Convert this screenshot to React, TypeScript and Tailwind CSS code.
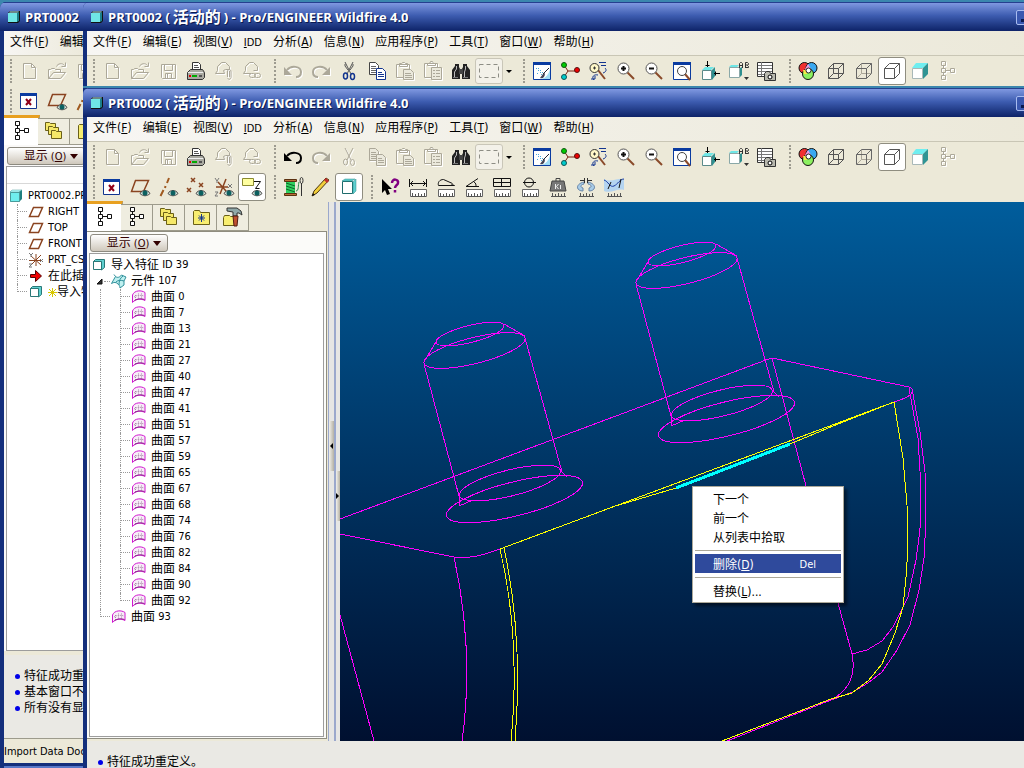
import type { ReactNode } from "react";
import clsx from "clsx";

type IconName = keyof typeof icons;

type Tool = {
  icon: IconName;
  label: string;
  disabled?: boolean;
  pressed?: boolean;
};

type MenuEntry = { text: string; mnemonic?: string };

const menus: MenuEntry[] = [
  { text: "文件", mnemonic: "F" },
  { text: "编辑", mnemonic: "E" },
  { text: "视图", mnemonic: "V" },
  { text: "IDD" },
  { text: "分析", mnemonic: "A" },
  { text: "信息", mnemonic: "N" },
  { text: "应用程序", mnemonic: "P" },
  { text: "工具", mnemonic: "T" },
  { text: "窗口", mnemonic: "W" },
  { text: "帮助", mnemonic: "H" },
];

const narrowMenus: MenuEntry[] = [{ text: "文件", mnemonic: "F" }, { text: "编辑" }];

const surfaces = [0, 7, 13, 21, 27, 40, 47, 41, 51, 57, 59, 65, 67, 68, 74, 76, 82, 84, 90, 92];

const g = "#aca899";

const eye = (
  <>
    <path d="M10 16.500c2-4 8-4 10 0-3 3-7 3-10 0z" fill="#d8e4dc" stroke="#444" />
    <circle cx="15" cy="16" r="2.500" fill="#0c6060" />
  </>
);

const icons = {
  fresh: <path d="M4.500 2.500h8l4 4v11h-12zM12.500 2.500v4h4" fill="none" stroke={g} />,
  open: (
    <path
      d="M1.500 17.500v-9h2l1-1h3l1 1h5v3M1.500 17.500l5-6h12l-5 6zM9.500 5.500c1-3 6-4 8-1M18.500 1.500v4h-4"
      fill="none"
      stroke={g}
    />
  ),
  save: (
    <>
      <path d="M3.500 3.500h14v14h-13l-1-1z" fill="none" stroke={g} />
      <path d="M6.500 3.500v6h8v-6M7.500 17.500v-5h6v5M9.500 13v4" fill="none" stroke={g} />
    </>
  ),
  print: (
    <>
      <path d="M6.500 9.500v-8h6l2 2v6z" fill="#fff" stroke="#333" />
      <path d="M8 4.500h4M8 6.500h5M8 8.500h5" stroke="#555" />
      <path d="M1.500 11.500l3-3h12l2 3v5l-2 2h-15z" fill="#a9a9a0" stroke="#333" />
      <path d="M2 11.500h15" stroke="#eee" />
      <path d="M3 14h2v2H3z" fill="#d00" />
      <path d="M6 14h5v2H6z" fill="#0a0" />
      <path d="M13 14h3v2h-3z" fill="#555" />
    </>
  ),
  mailClip: (
    <path
      d="M10.500 12.500h-9l2-3v-4l4-4h4l4 4v3h-4l-2 1zM13.500 16V9.500l1.500-1 2 1v7l-1.500 2-2-1M15.500 10v6"
      fill="none"
      stroke={g}
    />
  ),
  mailLink: (
    <>
      <path d="M9 12.500h-7.500l2-3v-4l4-4h4l4 4v4h-4" fill="none" stroke={g} />
      <rect x="7.500" y="12.500" width="6" height="4" rx="2" fill="none" stroke={g} />
      <rect x="12.500" y="12.500" width="6" height="4" rx="2" fill="none" stroke={g} />
    </>
  ),
  undo: (
    <>
      <path d="M4 9c4-5 14-4 14 2 0 3-2 5-5 5" fill="none" stroke="currentColor" strokeWidth="2" />
      <path d="M1 6v8h8z" fill="currentColor" />
    </>
  ),
  redo: (
    <>
      <path d="M16 9C12 4 2 5 2 11c0 3 2 5 5 5" fill="none" stroke="currentColor" strokeWidth="2" />
      <path d="M19 6v8h-8z" fill="currentColor" />
    </>
  ),
  cut: (
    <>
      <path d="M6 1l6 12M14 1l-6 12M6 3v2l3 4M14 3v2l-3 4" fill="none" stroke="#555" />
      <ellipse cx="6.500" cy="15" rx="2" ry="3" fill="none" stroke="#12348f" strokeWidth="1.500" />
      <ellipse cx="13.500" cy="15.500" rx="2" ry="3" fill="none" stroke="#12348f" strokeWidth="1.500" />
    </>
  ),
  cutOff: (
    <>
      <path d="M6 1l6 12M14 1l-6 12" fill="none" stroke={g} />
      <ellipse cx="6.500" cy="15" rx="2" ry="3" fill="none" stroke={g} />
      <ellipse cx="13.500" cy="15.500" rx="2" ry="3" fill="none" stroke={g} />
    </>
  ),
  copy: (
    <>
      <path d="M2.500 1.500h6l3 3v9h-9z" fill="#fff" stroke="#444" />
      <path d="M4 5.500h5M4 7.500h5M4 9.500h5M4 11.500h5" stroke="#666" />
      <path d="M9.500 7.500h6l3 3v8h-9z" fill="#fff" stroke="#12348f" />
      <path d="M11 11.500h4M11 13.500h6M11 15.500h6" stroke="#12348f" />
    </>
  ),
  copyOff: (
    <>
      <path d="M2.500 1.500h6l3 3v9h-9z" fill="#ebe9dc" stroke={g} />
      <path d="M4 5.500h5M4 7.500h5M4 9.500h5M4 11.500h5" stroke={g} />
      <path d="M9.500 7.500h6l3 3v8h-9z" fill="#ebe9dc" stroke={g} />
      <path d="M11 11.500h4M11 13.500h6M11 15.500h6" stroke={g} />
    </>
  ),
  paste: (
    <>
      <path d="M1.500 3.500h13v13h-13zM4.500 5.500v-3h2l1-1h2l1 1h2v3z" fill="none" stroke={g} />
      <path d="M8.500 8.500h7l3 3v7h-10z" fill="#ebe9dc" stroke={g} />
      <path d="M10 12.500h6M10 14.500h7M10 16.500h7" stroke={g} />
    </>
  ),
  pasteSpecial: (
    <>
      <path d="M1.500 2.500h13v14h-13zM4.500 4.500v-2h2l1-2h2l1 2h2v2z" fill="none" stroke={g} />
      <path d="M8.500 6.500h10v12h-10z" fill="#ebe9dc" stroke={g} />
      <path d="M10 9.500h2M13 9.500h4M10 12.500h2M13 12.500h4M10 15.500h2M13 15.500h4" stroke={g} />
    </>
  ),
  find: (
    <>
      <path d="M4 3h4v3l1 2v10H1V9l3-4zM12 3h4v2l3 4v9h-8V8l1-2z" fill="#222" />
      <path d="M8 8h4v5H8z" fill="#444" />
      <path d="M5.500 5v3L3.500 11v6M14.500 5v3l-1 3v6" stroke="#bbb" fill="none" />
      <path d="M2 16.500h5M12 16.500h5" stroke="#777" />
    </>
  ),
  select: <path d="M.500 3.500h19v13H.500z" fill="none" stroke="#8d8d85" strokeDasharray="4 3" />,
  redraw: (
    <>
      <path d="M1.500 1.500h17v17h-17z" fill="#fff" stroke="#0a3ba0" />
      <path d="M1 1h18v3H1z" fill="#0a3ba0" />
      <path d="M9 18c5-1 8-5 9-10v10z" fill="#9fdcf5" />
      <path d="M4 7.500h3M6 9.500h4M8 11.500h4M9 13.500h3M5 12.500h2" stroke="#4aa6d8" strokeDasharray="1 1" />
      <path d="M11 13l6-6" stroke="#223" />
      <path d="M8 17c3 1 5-1 5-5l-2 1z" fill="#445" />
    </>
  ),
  orient: (
    <>
      <path d="M4 4l4 6h9M8 10l-4 6" fill="none" stroke="#7a1f10" />
      <circle cx="4" cy="4" r="2.500" fill="#0c0" stroke="#151" />
      <circle cx="4" cy="16" r="2.500" fill="#0cc" stroke="#155" />
      <circle cx="17" cy="9" r="2.500" fill="#e00" stroke="#511" />
    </>
  ),
  spin: (
    <>
      <path d="M10 9l7 9" stroke="#8a4a2a" strokeWidth="2" />
      <circle cx="6.500" cy="7" r="4.500" fill="#fff8c8" stroke="#333" />
      <path d="M5 7h3M6.500 5.500v3" stroke="#333" />
      <path d="M11 1.500h7M13 4.500h5M17 7c2 2 1 4-2 5M10 14c-4-1-7 2-4 5M3 18h4v-3" fill="none" stroke="#12348f" />
    </>
  ),
  zoomIn: (
    <>
      <path d="M11 11l7 7" stroke="#8a4a2a" strokeWidth="2" />
      <circle cx="7.500" cy="7.500" r="5.500" fill="#fff" stroke="#555" />
      <path d="M5 7.500h5M7.500 5v5" stroke="#111" strokeWidth="2" />
    </>
  ),
  zoomOut: (
    <>
      <path d="M11 11l7 7" stroke="#8a4a2a" strokeWidth="2" />
      <circle cx="7.500" cy="7.500" r="5.500" fill="#fff" stroke="#555" />
      <path d="M5 7.500h5" stroke="#111" strokeWidth="2" />
    </>
  ),
  refit: (
    <>
      <path d="M1.500 1.500h17v17h-17z" fill="#fff" stroke="#0a3ba0" />
      <path d="M1 1h18v3H1z" fill="#0a3ba0" />
      <path d="M13 13l5 6" stroke="#8a4a2a" strokeWidth="2" />
      <circle cx="10" cy="10" r="4.500" fill="#fff" stroke="#444" />
    </>
  ),
  reorient: (
    <>
      <path d="M2.500 9.500h9v9h-9z" fill="#fff" stroke="#5a8a8a" />
      <path d="M2 9l3-3h9l-3 3z" fill="#6fe6e6" />
      <path d="M12 9l3-3v9l-3 4z" fill="#2f8f8f" />
      <path d="M7.500 0v6M5.500 4.500h4M20 12.500h-6M15.500 10.500v4" stroke="#000" />
    </>
  ),
  viewList: (
    <>
      <path d="M1.500 6.500h10v10h-10z" fill="#fff" stroke="#8aa8a8" />
      <path d="M1 6l2-2h8l-2 2z" fill="#6fe6e6" />
      <path d="M12 7l2-1v8l-2 2z" fill="#2f8f8f" />
      <path d="M11.500 7V2.500l1-1h1l1 1V7M12 4.500h3M17.500 7V1.500h2l1 1v1l-1 1 1 1v1h-3M18 4h2" fill="none" stroke="#333" />
      <path d="M16 16h5l-2.500 3z" fill="#333" />
    </>
  ),
  viewManager: (
    <>
      <path d="M1.500 1.500h15v14h-15z" fill="#fff" stroke="#333" />
      <path d="M2 4.500h14M2 7.500h14M2 10.500h14M2 13.500h14M5.500 1v14" stroke="#777" />
      <path d="M8.500 12.500l2-2h3l1 2h5v7h-11z" fill="#b8b8ae" stroke="#333" />
      <circle cx="14" cy="16" r="2" fill="#fff" stroke="#000" />
    </>
  ),
  color: (
    <>
      <circle cx="6.500" cy="7" r="5.500" fill="#f03030" stroke="#111" />
      <circle cx="13.500" cy="7" r="5.500" fill="#3aa8f0" stroke="#111" />
      <circle cx="10" cy="13" r="5.500" fill="#8cf060" stroke="#111" />
      <path d="M7 8l3-5 3 5-3 4z" fill="#f49ae0" />
      <path d="M5 9h4v4H6z" fill="#f5e94a" />
      <circle cx="10.500" cy="9.500" r="2.500" fill="#fff" stroke="#222" />
    </>
  ),
  wireframe: (
    <path
      d="M2.500 7.500h10v10h-10zM7.500 2.500h10v10h-10zM2.500 7.500l5-5M12.500 7.500l5-5M2.500 17.500l5-5M12.500 17.500l5-5"
      fill="none"
      stroke="#555"
    />
  ),
  hidden: (
    <>
      <path d="M7.500 3v9.500H17M3 17l4.500-4.500" fill="none" stroke="#aaa698" />
      <path d="M2.500 7.500h10v10h-10zM2.500 7.500l5-5h10v10l-5 5M12.500 7.500l5-5" fill="none" stroke="#666" />
    </>
  ),
  noHidden: <path d="M2.500 7.500h10v10h-10zM2.500 7.500l5-5h10v10l-5 5M12.500 7.500l5-5" fill="#fff" stroke="#555" />,
  shaded: (
    <>
      <path d="M2.500 7.500h10v10h-10z" fill="#fff" stroke="#a8b8b8" />
      <path d="M2 7l4-5h12l-5 5z" fill="#6feef0" />
      <path d="M13 7l5-5v11l-5 5z" fill="#2f9494" />
    </>
  ),
  treeOff: (
    <path
      d="M3.500.500h4v4h-4zM3.500 7.500h4v4h-4zM3.500 14.500h4v4h-4zM12.500 7.500h4v4h-4zM5.500 5v2M5.500 12v2M8 9.500h4"
      fill="none"
      stroke={g}
    />
  ),
  tree: (
    <path
      d="M3.500.500h4v4h-4zM3.500 7.500h4v4h-4zM3.500 14.500h4v4h-4zM12.500 7.500h4v4h-4zM5.500 5v2M5.500 12v2M8 9.500h4"
      fill="#fff"
      stroke="#111"
    />
  ),
  closeWin: (
    <>
      <path d="M1.500 2.500h16v15h-16z" fill="#fff" stroke="#12348f" />
      <path d="M1 2h17v3H1z" fill="#0a3ba0" />
      <path d="M7 8l5 6M12 8l-5 6" stroke="#900018" strokeWidth="2" />
    </>
  ),
  planes: (
    <>
      <path d="M5.500 3.500h13l-5 11h-12z" fill="none" stroke="#8a4420" strokeWidth="1.500" />
      {eye}
    </>
  ),
  axes: (
    <>
      <path d="M11 1L9 6M7.500 9l-.5 2M5.500 13l-3 6" stroke="#a05a20" strokeWidth="2" />
      {eye}
    </>
  ),
  points: (
    <>
      <path d="M5 1l4 4M9 1L5 5M1 11l4 4M5 11l-4 4M13 6l4 4M17 6l-4 4" stroke="#8a4420" strokeWidth="1.500" />
      {eye}
    </>
  ),
  csys: (
    <>
      <path d="M12 2L6 17M4 5l8 9M2 10h12" stroke="#8a4420" strokeWidth="1.500" />
      <path d="M1 1l2 3 2-3M3 4v2M14 7l4 4M18 7l-4 4M1 15h3l-3 4h3" fill="none" stroke="#777" />
      {eye}
    </>
  ),
  notes: (
    <>
      <path d="M.500 1.500h11v7h-11z" fill="#ffffa0" stroke="#8a8a30" />
      <path d="M12 4.500h6.500l-5 7h4" fill="none" stroke="#111" />
      {eye}
    </>
  ),
  thread: (
    <>
      <path d="M1.500 2.500h12v2h-12zM1.500 16.500h12v2h-12z" fill="#b87038" stroke="#5a3010" />
      <path d="M3 5h9v11H3z" fill="#2fcf5f" />
      <path d="M3 6l9 3M3 9l9 3M3 12l9 3" stroke="#0a6a2a" />
      <path d="M18.500 19V6" stroke="#333" />
      <ellipse cx="18.500" cy="3.500" rx="1.500" ry="3" fill="none" stroke="#333" />
      <path d="M13 14c3 0 2-6 3-9" fill="none" stroke="#2a8a4a" />
    </>
  ),
  pencil: (
    <>
      <path d="M1 19l2-5L15 1l3 2L6 16z" fill="#f2cf3a" stroke="#4a3510" />
      <path d="M14 2l3 3" stroke="#c03030" strokeWidth="3" />
      <path d="M1 19l1-3 2 2z" fill="#111" />
    </>
  ),
  feature: (
    <>
      <path d="M3.500 4.500h10v12h-10z" fill="#fff" stroke="#1d6b6b" />
      <path d="M3 4l3-2h10l-3 2zM14 5l3-3v12l-3 3z" fill="#5fd0d0" stroke="#2f8f8f" strokeWidth=".5" />
    </>
  ),
  help: (
    <>
      <path d="M2 2v14l3-3 2 5 3-1-2-5h4z" fill="#000" />
      <path d="M12 6c0-5 7-4 6 0 0 2-3 2-3 5M15 13v2.500" fill="none" stroke="#800080" strokeWidth="2.500" />
    </>
  ),
  distance: (
    <path d="M1.500 2v8M18.500 2v8M2 6.500h16M5 4L2.500 6.500 5 9M15 4l2.500 2.500L15 9" fill="none" stroke="#111" />
  ),
  arcLen: <path d="M2.500 8.500h16l-3-1M2.500 8.500c-1-3 1-6 5-6l9 4" fill="none" stroke="#111" />,
  angle: <path d="M2 9.500h13M2 9.500l12-8M10 5c2 1 2 3 2 4" fill="none" stroke="#111" />,
  area: <path d="M1.500 1.500h17v8h-17zM2 5.500h16M9.500 1v8" fill="none" stroke="#111" />,
  diameter: (
    <>
      <circle cx="9" cy="5.500" r="4.500" fill="none" stroke="#111" />
      <path d="M3 5.500h13" stroke="#111" />
    </>
  ),
  mass: (
    <>
      <path d="M4 4h12l2 10H2z" fill="#777" stroke="#444" />
      <path d="M8 4V1.500h4V4" fill="none" stroke="#444" />
      <path d="M7.500 7v5M10.500 7l-2 2.500 2 2.500M12.500 8v4" fill="none" stroke="#eee" />
    </>
  ),
  section: (
    <>
      <path d="M8 5c-9 2-8 9-1 9v-3c-3-1-3-3 1-4zM12 5c9 2 8 9 1 9v-3c3-1 3-3-1-4z" fill="#a8cce8" stroke="#6a86a8" />
      <path d="M4 3.500h5M11 3.500h5M8.500 1v5M11.500 1v5" stroke="#333" />
    </>
  ),
  curvature: (
    <>
      <path d="M0 2c7 4 13-1 20 0v11c-7-2-13 4-20 1z" fill="#b4d4f0" />
      <path d="M0 3c4 1 6 8 10 6s6-7 10-7" fill="none" stroke="#1a3aa0" />
      <path d="M7 5l-3 7M17 2l-2 9" stroke="#111" />
    </>
  ),
};

const rulers: IconName[] = ["distance", "arcLen", "angle", "area", "diameter"];
const ticked: IconName[] = [...rulers, "mass", "section", "curvature"];

function Icon({ name }: { name: IconName }) {
  return (
    <svg width="20" height="20" viewBox="0 0 20 20" overflow="visible" className="shrink-0" aria-hidden="true">
      {icons[name]}
      {rulers.includes(name) && <path d="M2.500 12.500h16v7h-16z" fill="#fff" stroke="#666" />}
      {ticked.includes(name) && (
        <path d="M3 19.500h15M4.500 16v3M7.500 17v2M10.500 16v3M13.500 17v2M16.500 16v3" stroke="#555" />
      )}
    </svg>
  );
}

function ToolButton({ icon, label, disabled, pressed }: Tool) {
  return (
    <button
      type="button"
      aria-label={label}
      disabled={disabled}
      className={clsx(
        "flex h-7 w-7 shrink-0 items-center justify-center rounded-[3px]",
        disabled ? "text-[#aca899] drop-shadow-[1px_1px_0_#fff]" : "text-black",
        pressed && "border border-[#8f8d80] bg-white"
      )}
    >
      <Icon name={icon} />
    </button>
  );
}

function Grip({ first }: { first?: boolean }) {
  return (
    <div className={clsx("flex h-6 shrink-0 justify-end pr-[3px]", first ? "w-[11px]" : "w-[13px]")}>
      <span className="h-full border-l-2 border-dotted border-[#9d9b90]" />
    </div>
  );
}

const Row = ({ children }: { children: ReactNode }) => (
  <div role="toolbar" className="flex h-[30px] shrink-0 items-center overflow-hidden">
    {children}
  </div>
);

function MainToolbar({ editing }: { editing?: boolean }) {
  return (
    <Row>
      <Grip first />
      <ToolButton icon="fresh" label="新建" disabled />
      <ToolButton icon="open" label="打开" disabled />
      <ToolButton icon="save" label="保存" disabled />
      <ToolButton icon="print" label="打印" />
      <ToolButton icon="mailClip" label="发送附件" disabled />
      <ToolButton icon="mailLink" label="发送链接" disabled />
      <Grip />
      <ToolButton icon="undo" label="撤消" disabled={!editing} />
      <ToolButton icon="redo" label="重做" disabled />
      <ToolButton icon={editing ? "cutOff" : "cut"} label="剪切" disabled={editing} />
      <ToolButton icon={editing ? "copyOff" : "copy"} label="复制" disabled={editing} />
      <ToolButton icon="paste" label="粘贴" disabled />
      <ToolButton icon="pasteSpecial" label="选择性粘贴" disabled />
      <ToolButton icon="find" label="查找" />
      <button
        type="button"
        aria-label="选择框"
        className="flex h-[26px] w-7 shrink-0 items-center justify-center rounded-[3px] border border-[#c9c6b8] bg-[#f3f1e9]"
      >
        <Icon name="select" />
      </button>
      <button type="button" aria-label="选择选项" className="flex h-6 w-3 shrink-0 items-center justify-center">
        <span className="border-x-3 border-t-3 border-x-transparent border-t-black" />
      </button>
      <Grip />
      <ToolButton icon="redraw" label="重画" />
      <ToolButton icon="orient" label="旋转中心" />
      <ToolButton icon="spin" label="定向模式" />
      <ToolButton icon="zoomIn" label="放大" />
      <ToolButton icon="zoomOut" label="缩小" />
      <ToolButton icon="refit" label="重新调整" />
      <ToolButton icon="reorient" label="重定向" />
      <ToolButton icon="viewList" label="视图列表" />
      <ToolButton icon="viewManager" label="视图管理器" />
      <div className="w-px shrink-0" />
      <Grip />
      <ToolButton icon="color" label="外观" />
      <ToolButton icon="wireframe" label="线框" />
      <ToolButton icon="hidden" label="隐藏线" />
      <ToolButton icon="noHidden" label="无隐藏线" pressed />
      <ToolButton icon="shaded" label="着色" />
      <ToolButton icon="treeOff" label="模型树" disabled />
    </Row>
  );
}

function DatumToolbar() {
  return (
    <Row>
      <Grip first />
      <ToolButton icon="closeWin" label="关闭窗口" />
      <ToolButton icon="planes" label="基准平面" />
      <ToolButton icon="axes" label="基准轴" />
      <ToolButton icon="points" label="基准点" />
      <ToolButton icon="csys" label="坐标系" />
      <ToolButton icon="notes" label="注释" pressed />
      <Grip />
      <ToolButton icon="thread" label="修复" />
      <ToolButton icon="pencil" label="草绘" />
      <ToolButton icon="feature" label="特征" pressed />
      <Grip />
      <ToolButton icon="help" label="帮助" />
      <ToolButton icon="distance" label="距离" />
      <ToolButton icon="arcLen" label="长度" />
      <ToolButton icon="angle" label="角度" />
      <ToolButton icon="area" label="面积" />
      <ToolButton icon="diameter" label="直径" />
      <ToolButton icon="mass" label="质量" />
      <ToolButton icon="section" label="截面" />
      <ToolButton icon="curvature" label="曲率" />
    </Row>
  );
}

function TitleBar({ children, minimizable }: { children: ReactNode; minimizable?: boolean }) {
  return (
    <div className="flex h-[29px] shrink-0 items-center overflow-hidden border-t border-[#26408f] bg-linear-to-b from-[#8098e0] via-[#3d5cb0] via-45% to-[#0e2368] pl-[7px] font-bold text-white">
      <svg width="14" height="14" viewBox="0 0 14 14" className="mr-1 shrink-0" aria-hidden="true">
        <path d="M1 3l2-2h10v10l-2 2H1z" fill="#111" />
        <path d="M1 3h9v9H1z" fill="#6fe6e6" />
        <path d="M2 2.500l1-1h9l-1 1z" fill="#c8ffff" />
        <path d="M10 3l2-1v9l-2 1z" fill="#1a7f8a" />
      </svg>
      <h1 className="flex items-center whitespace-pre font-['Open_Sans','Noto_Sans_CJK_SC',sans-serif] text-[13px] leading-6 [text-shadow:1px_1px_0_#0a1a50]">
        {children}
      </h1>
      {minimizable && (
        <button
          type="button"
          aria-label="最小化"
          className="mr-12 ml-auto h-[15px] w-5 shrink-0 rounded-[2px] border border-[#a8bcf0] bg-[#3a58b0] pt-1.5 pl-1"
        >
          <span className="block h-[3px] w-2 bg-[#0a1a50]" />
        </button>
      )}
    </div>
  );
}

const fullTitle = (
  <>
    PRT0002 (<span className="mx-[3px] text-base leading-6">活动的</span>) - Pro/ENGINEER Wildfire 4.0
  </>
);

function MenuBar({ entries }: { entries: MenuEntry[] }) {
  return (
    <nav className="flex h-[25px] shrink-0 items-center gap-[11px] overflow-hidden border-b border-[#c9c6b5] bg-linear-to-r from-[#f7f6f3] to-[#ebe8d8] pb-0.5 pl-1.5">
      {entries.map(({ text, mnemonic }) => (
        <button key={text} type="button" className="shrink-0 whitespace-nowrap leading-5">
          {text === "IDD" ? (
            <span className="text-[11px]">
              <u>I</u>DD
            </span>
          ) : (
            text
          )}
          {mnemonic && (
            <>
              (<u>{mnemonic}</u>)
            </>
          )}
        </button>
      ))}
    </nav>
  );
}

type FrameProps = {
  className: string;
  title: ReactNode;
  entries: MenuEntry[];
  minimizable?: boolean;
  children: ReactNode;
};

function WindowFrame({ className, title, entries, minimizable, children }: FrameProps) {
  return (
    <section className={clsx("absolute border-t-2 border-[#3b87ae]", className)}>
      <div className="flex h-full flex-col overflow-hidden rounded-tl-md bg-[#142f7c]">
        <TitleBar minimizable={minimizable}>{title}</TitleBar>
        <div className="ml-1 flex min-h-0 flex-1 flex-col bg-[#ece9d8]">
          <MenuBar entries={entries} />
          {children}
        </div>
      </div>
    </section>
  );
}

const FolderStack = () => (
  <svg width="20" height="20" viewBox="0 0 20 20" className="shrink-0" aria-hidden="true">
    {[0, 4, 8].map((n) => (
      <path
        key={n}
        d={`M${1.5 + (n * 3) / 4} ${1.5 + n}h4l1 1h5v7h-10z`}
        fill="#f5e868"
        stroke="#6a6018"
      />
    ))}
  </svg>
);

const FolderStar = () => (
  <svg width="20" height="20" viewBox="0 0 20 20" className="shrink-0" aria-hidden="true">
    <path d="M2.500 4.500l1-1h5l1 2h9v12h-16z" fill="#f8ee70" stroke="#6a6018" />
    <path d="M10.500 7v8M7 11h7M8 8.500l5 5M13 8.500l-5 5" stroke="#12348f" />
  </svg>
);

const FolderHammer = () => (
  <svg width="20" height="20" viewBox="0 0 20 20" className="shrink-0" aria-hidden="true">
    <path d="M.500 10.500l1-2h5l1 1h5v9h-12z" fill="#f8ee70" stroke="#6a6018" />
    <path d="M4 1h10l4 3 1 4-3-2h-2v3h-4V5L4 4z" fill="#90a8a8" stroke="#333" />
    <path d="M10 9h5l-1 10h-3z" fill="#c05030" stroke="#501c10" />
  </svg>
);

function Tabs({ items }: { items: { label: string; node: ReactNode }[] }) {
  return (
    <div role="tablist" className="flex h-[29px] shrink-0 items-end">
      {items.map(({ label, node }, i) => (
        <button
          key={label}
          type="button"
          role="tab"
          aria-label={label}
          aria-selected={i === 0}
          className={clsx(
            "flex shrink-0 items-center justify-center border-r border-[#9d9b8c] pb-px pl-px",
            i === 0
              ? "h-[30px] w-9 border-t-[3px] border-t-[#e8a020] bg-white"
              : "h-[27px] w-8 border-t border-b bg-[#efede0]",
            i === 1 && "-ml-0.5"
          )}
        >
          {node}
        </button>
      ))}
    </div>
  );
}

function ShowButton() {
  return (
    <button
      type="button"
      className="flex h-[18px] w-[78px] shrink-0 items-center justify-center gap-1 rounded-[3px] border border-[#8d8a80] bg-linear-to-b from-white to-[#cfc8bc] leading-4 text-[#300]"
    >
      <span className="pl-2.5">
        显示<span className="text-[11px]"> (<u>O</u>)</span>
      </span>
      <span className="border-x-4 border-t-5 border-x-transparent border-t-[#300]" />
    </button>
  );
}

type GuideKind = "line" | "tee" | "end";

function Guide({ kind }: { kind: GuideKind }) {
  return (
    <span className="flex h-4 w-5 shrink-0 pl-2.5">
      <span className={clsx("border-l border-dotted border-[#999]", kind === "end" ? "h-2" : "h-4")} />
      {kind !== "line" && <span className="h-2 flex-1 border-b border-dotted border-[#999]" />}
    </span>
  );
}

function TreeRow({ guides, icon, children }: { guides: GuideKind[]; icon: ReactNode; children: ReactNode }) {
  return (
    <li className="flex h-4 items-center whitespace-nowrap leading-4">
      {guides.map((kind, i) => (
        <Guide key={i} kind={kind} />
      ))}
      <span className="mr-1 ml-px flex w-4 shrink-0 justify-center">{icon}</span>
      {children}
    </li>
  );
}

const N = ({ children }: { children: ReactNode }) => <span className="text-[11px]">{children}</span>;

const CubeIcon = () => (
  <svg width="12" height="12" viewBox="0 0 12 12" aria-hidden="true">
    <path d="M.500 2.500h8v8h-8z" fill="#fff" stroke="#2a7878" />
    <path d="M.500 2.500l2-2h9v8l-3 2.500v-8.500z" fill="#5fd0d0" stroke="#2a7878" />
  </svg>
);

const PartIcon = () => (
  <svg width="14" height="14" viewBox="0 0 14 14" aria-hidden="true">
    <path d="M1 3h9v10H1z" fill="#6feeee" />
    <path d="M1 3l2-2h10l-3 2z" fill="#b8ffff" stroke="#4a9a9a" strokeWidth=".5" />
    <path d="M10 3l3-2v9l-3 3z" fill="#1f8080" />
    <path d="M1.500 3.500h9v9h-9z" fill="none" stroke="#4a9a9a" />
  </svg>
);

const PlaneIcon = () => (
  <svg width="16" height="14" viewBox="0 0 16 14" aria-hidden="true">
    <path d="M5.500 2.500h9l-4 9h-9z" fill="none" stroke="#8a4420" strokeWidth="1.500" />
  </svg>
);

const CsysIcon = () => (
  <svg width="16" height="16" viewBox="0 0 16 16" aria-hidden="true">
    <path d="M8 2v12M3 4l10 9M13 3L3 13M1 8.500h13" stroke="#8a4420" />
    <path d="M1 1l2 2 2-2M3 3v2M12 7l3 3M15 7l-3 3M1 12h3l-3 3h3" fill="none" stroke="#777" />
  </svg>
);

const InsertIcon = () => (
  <svg width="14" height="12" viewBox="0 0 14 12" aria-hidden="true">
    <path d="M1.500 4.500h5v-4l6 5.500-6 5.500v-4h-5z" fill="#f00000" stroke="#500" />
  </svg>
);

const SurfaceIcon = () => (
  <svg width="16" height="14" viewBox="0 0 16 14" aria-hidden="true">
    <path d="M1.500 12.500V5c2-5 9-5 12.500-2.500v8c-4-2-9-2-12.500 2z" fill="#f8ecf8" stroke="#d018d0" />
    <path d="M4.500 5v5M7.500 3.500v6M10.500 3.500v6M3 7c3-2 7-2 10-1" fill="none" stroke="#a888a8" strokeDasharray="1 1" />
    <path d="M3.500 10.500c3-2 7-2 10-1" fill="none" stroke="#902090" />
  </svg>
);

const QuiltIcon = () => (
  <svg width="16" height="16" viewBox="0 0 16 16" aria-hidden="true">
    <path d="M.500 10.500l4-7c2 1.500 4 1 6-1.500l4.500 2-2 4v4l-4 3c0-2-1-3-2-4-2-2-4-2-6.500-.5z" fill="#bff0f0" stroke="#2f8f9a" />
    <path d="M5 9c2-2 5-2 8-1M8 12c0-4 1-7 4-9M4.500 3.500L3 1.500" fill="none" stroke="#2f8f9a" />
  </svg>
);

const Expander = () => (
  <span className="flex h-4 w-5 shrink-0 items-center pl-1.5">
    <svg width="8" height="8" viewBox="0 0 8 8" aria-hidden="true">
      <path d="M6 2v5H1z" fill="#333" stroke="#111" />
    </svg>
    <span className="h-px flex-1 border-b border-dotted border-[#999]" />
  </span>
);

function ModelTree() {
  return (
    <ul className="pt-[3px]">
      <TreeRow guides={[]} icon={<CubeIcon />}>
        导入特征<N>&nbsp;ID 39</N>
      </TreeRow>
      <li className="flex h-4 items-center whitespace-nowrap leading-4">
        <Expander />
        <span className="mr-1 ml-px">
          <QuiltIcon />
        </span>
        元件<N>&nbsp;107</N>
      </li>
      {surfaces.map((id, i) => (
        <TreeRow key={id} guides={["line", i === surfaces.length - 1 ? "end" : "tee"]} icon={<SurfaceIcon />}>
          曲面<N>&nbsp;{id}</N>
        </TreeRow>
      ))}
      <TreeRow guides={["end"]} icon={<SurfaceIcon />}>
        曲面<N>&nbsp;93</N>
      </TreeRow>
    </ul>
  );
}

function PartTree() {
  return (
    <ul className="pt-1">
      <TreeRow guides={[]} icon={<PartIcon />}>
        <N>PRT0002.PR</N>
      </TreeRow>
      {["RIGHT", "TOP", "FRONT"].map((name) => (
        <TreeRow key={name} guides={["tee"]} icon={<PlaneIcon />}>
          <N>{name}</N>
        </TreeRow>
      ))}
      <TreeRow guides={["tee"]} icon={<CsysIcon />}>
        <N>PRT_CS</N>
      </TreeRow>
      <TreeRow guides={["tee"]} icon={<InsertIcon />}>
        在此插
      </TreeRow>
      <TreeRow guides={["end"]} icon={<CubeIcon />}>
        <svg width="9" height="9" viewBox="0 0 9 9" className="shrink-0" aria-hidden="true">
          <path d="M4.500 0v9M0 4.500h9M1 1l7 7M8 1L1 8" stroke="#d8c800" />
        </svg>
        导入特
      </TreeRow>
    </ul>
  );
}

function Message({ children }: { children: ReactNode }) {
  return (
    <li className="flex h-4 items-center gap-1 whitespace-nowrap leading-4">
      <span className="h-[5px] w-[5px] shrink-0 rounded-full bg-[#0000e8]" />
      {children}
    </li>
  );
}

function Pin() {
  return (
    <>
      <ellipse cx="470" cy="334" rx="35" ry="8.500" transform="rotate(-14 470 334)" />
      <ellipse cx="474.500" cy="350.500" rx="52" ry="13" transform="rotate(-14 474.500 350.500)" />
      <path d="M436 342l-12 20M504 324l21 12M424 364l35 132M525 338l37 134M459 496v10l14-6M562 472l5 5" />
      <ellipse cx="510" cy="483" rx="52" ry="13" transform="rotate(-14 510 483)" />
      <ellipse cx="514.500" cy="499" rx="70" ry="17" transform="rotate(-14 514.500 499)" />
    </>
  );
}

function Viewport() {
  return (
    <svg className="block h-full w-full" fill="none" shapeRendering="crispEdges" aria-label="模型">
      <g transform="translate(-340 -202)">
        <g stroke="#ff00ff">
          <Pin />
          <g transform="translate(212 -80)">
            <Pin />
          </g>
          <path d="M340 519L766 360l6-2 137 29c4 1 4 4 2 7-4 4-10 6-17 8" />
          <path d="M340 534l114 23c16 2 30-2 46-8" />
          <path d="M454 557c12 55 17 120 8 184M340 615l34 126" />
          <path d="M772 358L806 486 838 603 852 654c4 20-2 36-21 46" />
          <path d="M852 654l15-4 15-9 11-14 15-30 8-37 3-23 2-17-1-49-2-33-9-50" />
          <path d="M912 389l8 43 5 40 1 46-2 40-5 32-9 35-13 25-15 22-14 11-15 9-22 8L727 741" />
        </g>
        <g stroke="#ffff00">
          <path d="M500 549L894 402" />
          <path d="M612 507l64-19 114-44 43-18 61-24" />
          <path d="M500 549c14 60 18 120 11 192M504 548c13 60 17 120 11 193" />
          <path d="M894 402l9 56 4 47 1 42-2 30-3 30-8 26-13 31-14 17-16 12-21 6L722 741" />
        </g>
        <path d="M676 488L790 444" stroke="#00ffff" strokeWidth="3" />
      </g>
    </svg>
  );
}

const popupItem = "flex h-[19px] w-full items-center pt-0.5 pl-[18px] leading-4 hover:bg-[#2f4a9c] hover:text-white";

function ContextMenu() {
  return (
    <div
      role="menu"
      className="absolute top-[284px] left-[352px] w-[152px] border border-[#aca899] bg-white p-0.5 shadow-[3px_3px_3px_rgba(0,0,0,0.5)]"
    >
      {["下一个", "前一个", "从列表中拾取"].map((text) => (
        <button key={text} type="button" role="menuitem" className={popupItem}>
          {text}
        </button>
      ))}
      <div className="flex h-2 items-center">
        <hr className="w-full border-[#aca899]" />
      </div>
      <button type="button" role="menuitem" className={clsx(popupItem, "bg-[#2f4a9c] text-white")}>
        删除(<u>D</u>)<span className="mr-[25px] ml-auto text-[11px]">Del</span>
      </button>
      <div className="flex h-2 items-center">
        <hr className="w-full border-[#aca899]" />
      </div>
      <button type="button" role="menuitem" className={popupItem}>
        替换(<u>L</u>)...
      </button>
    </div>
  );
}

const sashHandle =
  "flex h-[50px] items-center justify-center bg-linear-to-r from-[#f2f1ec] to-[#b5b1a4]";

function Sash() {
  return (
    <div className="flex w-3 shrink-0 border-l border-[#9ba8cc] bg-[#e6e6e4]">
      <div className="flex flex-1 flex-col pt-[219px]">
        <button type="button" aria-label="收起" className={sashHandle}>
          <span className="border-y-3 border-r-3 border-y-transparent border-r-black" />
        </button>
      </div>
      <div className="flex flex-1 flex-col border-l-2 border-[#9ba8cc] pt-[269px]">
        <button type="button" aria-label="展开" className={sashHandle}>
          <span className="border-y-3 border-l-3 border-y-transparent border-l-black" />
        </button>
      </div>
    </div>
  );
}

export default function App() {
  return (
    <main className="relative h-screen w-full overflow-hidden bg-[#3b87ae] font-['DejaVu_Sans_Condensed','Noto_Sans_CJK_SC',sans-serif] text-xs text-black">
      <WindowFrame className="top-0 bottom-0 left-0 w-24" title="PRT0002" entries={narrowMenus}>
        <Row>
          <Grip first />
          <ToolButton icon="fresh" label="新建" disabled />
          <ToolButton icon="open" label="打开" disabled />
          <ToolButton icon="save" label="保存" disabled />
        </Row>
        <Row>
          <Grip first />
          <ToolButton icon="closeWin" label="关闭窗口" />
          <ToolButton icon="planes" label="基准平面" />
          <ToolButton icon="axes" label="基准轴" />
        </Row>
        <Tabs
          items={[
            { label: "模型树", node: <Icon name="tree" /> },
            { label: "文件夹浏览器", node: <FolderStack /> },
            { label: "收藏夹", node: <FolderStar /> },
          ]}
        />
        <div className="flex min-h-0 flex-1 flex-col bg-[#faf9f8] pt-0.5 pl-0.5">
          <div className="pl-px">
            <ShowButton />
          </div>
          <div className="mt-px min-h-0 flex-1 overflow-hidden border border-[#9d9d9d] bg-white">
            <div className="h-[17px] border-b border-[#d8d8d8]" />
            <PartTree />
          </div>
        </div>
        <ul className="mt-1 h-[84px] shrink-0 border-b border-[#9d9b8c] bg-[#eae9e4] pt-[13px] pl-[11px]">
          <Message>特征成功重</Message>
          <Message>基本窗口不</Message>
          <Message>所有没有显</Message>
        </ul>
        <footer className="h-6 shrink-0 overflow-hidden whitespace-nowrap pt-px text-[11px] leading-6">
          Import Data Doc
        </footer>
        <div className="h-[5px] shrink-0 border-b-2 border-[#5878c8] bg-[#142f7c]" />
      </WindowFrame>

      <WindowFrame
        className="top-0 right-[-60px] left-[83px] h-28"
        title={fullTitle}
        entries={menus}
        minimizable
      >
        <MainToolbar />
      </WindowFrame>

      <WindowFrame
        className="top-[86px] right-[-60px] bottom-[-60px] left-[83px]"
        title={fullTitle}
        entries={menus}
        minimizable
      >
        <MainToolbar editing />
        <DatumToolbar />
        <div className="flex min-h-0 flex-1">
          <div className="flex w-60 shrink-0 flex-col">
            <Tabs
              items={[
                { label: "特征树", node: <Icon name="tree" /> },
                { label: "模型树", node: <Icon name="tree" /> },
                { label: "文件夹浏览器", node: <FolderStack /> },
                { label: "收藏夹", node: <FolderStar /> },
                { label: "连接", node: <FolderHammer /> },
              ]}
            />
            <div className="mb-0.5 flex min-h-0 flex-1 flex-col border-t border-r border-b border-[#8f8d80] bg-[#fbfbf9] pt-0.5 pr-0.5 pb-px pl-0.5">
              <div className="pb-px pl-px">
                <ShowButton />
              </div>
              <div className="min-h-0 flex-1 border border-[#9d9d9d] bg-white">
                <ModelTree />
              </div>
            </div>
          </div>
          <div className="w-px shrink-0" />
          <Sash />
          <div className="relative min-w-0 flex-1 bg-linear-to-b from-[#005d9c] to-[#001030]">
            <Viewport />
            <ContextMenu />
          </div>
        </div>
        <ul className="h-[87px] shrink-0 bg-[#eae9e4] pt-[13px] pl-[11px]">
          <Message>特征成功重定义。</Message>
        </ul>
      </WindowFrame>
    </main>
  );
}
